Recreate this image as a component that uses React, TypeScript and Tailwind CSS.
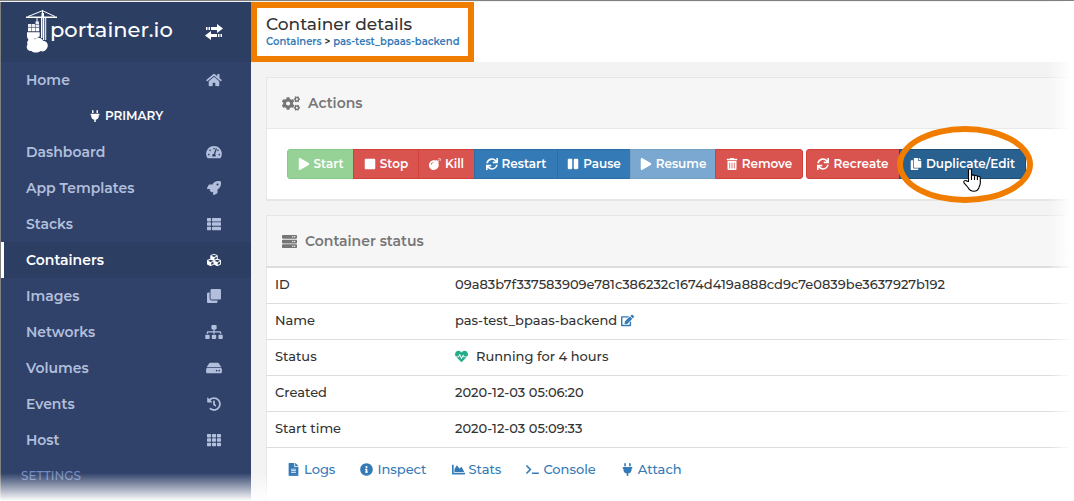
import type { ReactNode } from "react";
import {
  FaBomb,
  FaChartArea,
  FaClone,
  FaCogs,
  FaCopy,
  FaCubes,
  FaEdit,
  FaFileAlt,
  FaHdd,
  FaHeartbeat,
  FaHistory,
  FaHome,
  FaInfoCircle,
  FaPause,
  FaPlay,
  FaPlug,
  FaRocket,
  FaServer,
  FaSitemap,
  FaStop,
  FaSync,
  FaTachometerAlt,
  FaTerminal,
  FaTh,
  FaThList,
  FaTrashAlt,
} from "react-icons/fa";

const NAV_ITEMS = [
  { label: "Dashboard", icon: FaTachometerAlt },
  { label: "App Templates", icon: FaRocket },
  { label: "Stacks", icon: FaThList },
  { label: "Containers", icon: FaCubes, active: true },
  { label: "Images", icon: FaClone },
  { label: "Networks", icon: FaSitemap },
  { label: "Volumes", icon: FaHdd },
  { label: "Events", icon: FaHistory },
  { label: "Host", icon: FaTh },
];

const ACTIONS = [
  { label: "Start", icon: FaPlay, width: "w-[67px]", color: "bg-[#96d196] border-[#88c888] rounded-l-[3px]", disabled: true },
  { label: "Stop", icon: FaStop, width: "w-[66px]", color: "bg-[#d9534f] border-[#d43f3a]" },
  { label: "Kill", icon: FaBomb, width: "w-[57px]", color: "bg-[#d9534f] border-[#d43f3a]" },
  { label: "Restart", icon: FaSync, width: "w-[84px]", color: "bg-[#337ab7] border-[#2e6da4]" },
  { label: "Pause", icon: FaPause, width: "w-[74px]", color: "bg-[#337ab7] border-[#2e6da4]" },
  { label: "Resume", icon: FaPlay, width: "w-[86px]", color: "bg-[#7aa8d0] border-[#769fc4]", disabled: true },
  { label: "Remove", icon: FaTrashAlt, width: "w-[88px]", color: "bg-[#d9534f] border-[#d43f3a] rounded-r-[3px]" },
];

const LINKS = [
  { label: "Logs", icon: FaFileAlt },
  { label: "Inspect", icon: FaInfoCircle },
  { label: "Stats", icon: FaChartArea },
  { label: "Console", icon: FaTerminal },
  { label: "Attach", icon: FaPlug },
];

const BUTTON =
  "flex h-[30px] shrink-0 items-center justify-center gap-1 border text-[12px] font-semibold whitespace-nowrap text-white";

const CraneLogo = () => (
  <svg width="32" height="44" viewBox="0 0 32 44" fill="#fff" aria-hidden="true">
    <path d="M0 6.500h31V8H0z" />
    <path d="M2 6.500 16.500 0.700 29 6.500M16.500 0v6.500" fill="none" stroke="#fff" />
    <path d="M15.500 3h2.500v5h-2.500z" />
    <path d="M15 8h1v20h-1zM17 8h1.300v22H17zM19.200 8h1v22h-1z" />
    <path d="M16 8h1v20h-1z" opacity=".45" />
    <path d="M10.500 8h1v4h-1z" />
    <path d="M9.500 11.500H13V14H9.500zM2 14h3.500v3.300H2zM6 14h3v3.300H6zM9.500 14.500h3.700v2.800H9.500z" opacity=".9" />
    <path d="M2 17.800h3.500v3.500H2zM6 17.800h3v3.500H6zM9.500 17.800h3.700v3.500H9.500z" />
    <path d="M1 22.200h12.700v4L11 28 4 30H2.500L1 27z" />
    <path d="M5.500 41C1.500 41.500-.5 37.500 1.500 34.500 0 30.500 4.500 27.500 8.500 29.300c2.500-2.800 7.500-1.800 8.500 1.400 4.500.3 6 4.800 3.800 7.800-1.300 2.600-4.300 3.500-6.300 2.500-2.500 2-7 2-9 0z" />
  </svg>
);

const ToggleIcon = () => (
  <svg width="18" height="16" viewBox="0 0 18 16" fill="#fff" aria-hidden="true">
    <path d="M1 3h1.500v3H1zM3.500 3H5v3H3.500zM6 3h6V0l6 4.500L12 9V6H6z" />
    <path d="M17 10h-1.500v3H17zM14.500 10H13v3h1.500zM12 10H6V7l-6 4.500L6 16v-3h6z" />
  </svg>
);

const HandCursor = () => (
  <svg width="19" height="24" viewBox="0 0 19 24" aria-hidden="true">
    <path
      d="M5.500 13.500V2.500c0-2.300 3-2.300 3 0v5.300c.6-1.300 2.700-1.200 3 .4.700-1.200 2.700-.9 2.900.6.900-1 2.900-.6 2.900 1.200V15c0 2-1 3-1.500 5-1 2.500-2.600 3.200-5 3.200-3 0-4.600-1.200-5.800-3.700L1 14.800c-.8-1.600.9-3 2.300-1.900z"
      fill="#fff"
      stroke="#000"
      strokeWidth="1.100"
      strokeLinejoin="round"
    />
    <path d="M8.500 7.500V12M11.500 8.500V12M14.400 9V12" stroke="#000" strokeWidth="1.100" fill="none" />
  </svg>
);

const Sidebar = () => (
  <aside className="w-[251px] shrink-0 border-l border-[#808080] bg-[#30426a]">
    <div className="flex h-[60px] items-center justify-between bg-[#2d3e63] pr-7 pl-[25px]">
      <a href="#home" className="flex items-center text-[21px] leading-6 font-medium text-white">
        <CraneLogo />
        <span className="-ml-2 pb-1">portainer.io</span>
      </a>
      <button type="button" aria-label="Toggle sidebar">
        <ToggleIcon />
      </button>
    </div>
    <nav className="text-[14px] font-semibold text-[#b2bfdc]">
      <a href="#home" className="flex h-9 items-center justify-between pr-7 pl-[25px]">
        Home
        <FaHome className="h-[14px] w-[18px]" />
      </a>
      <div className="flex h-9 items-center justify-center gap-1 text-[12px] text-white">
        <FaPlug className="h-3 w-auto" />
        PRIMARY
      </div>
      {NAV_ITEMS.map(({ label, icon: Icon, active }) => (
        <a
          key={label}
          href={`#${label}`}
          className={`flex h-9 items-center justify-between border-l-3 pr-7 pl-[22px] ${
            active ? "border-white bg-[#2d3e63] text-white" : "border-transparent"
          }`}
        >
          {label}
          <Icon className="h-[14px] w-[18px]" />
        </a>
      ))}
      <div className="flex h-9 items-center pl-5 text-[12px] font-medium text-[#738bc0]">SETTINGS</div>
    </nav>
  </aside>
);

const DetailRow = ({ label, children }: { label: string; children: ReactNode }) => (
  <tr className="h-9 border-b border-[#dddddd]">
    <th scope="row" className="w-[180px] pb-px pl-2 text-left font-medium">
      {label}
    </th>
    <td className="pb-px pl-2">{children}</td>
  </tr>
);

const App = () => {
  return (
    <div className="relative flex h-screen overflow-hidden border-t border-[#808080] bg-[#f3f3f3] pt-px font-['Montserrat','Inter',sans-serif] text-[#333]">
      <Sidebar />

      <main className="min-w-0 flex-1">
        <header className="flex h-[60px] bg-white">
          <div className="border-6 border-[#f07d00] pt-[6px] pr-2 pl-[9px]">
            <h1 className="text-[17px] leading-5 font-medium">Container details</h1>
            <div className="text-[10px] leading-4 font-semibold">
              <a href="#containers" className="text-[#337ab7]">Containers</a>
              {" > "}
              <a href="#container" className="text-[#337ab7]">pas-test_bpaas-backend</a>
            </div>
          </div>
        </header>

        <div className="flex flex-col gap-[14px] pt-[15px] pl-[15px]">
          {/* Actions */}
          <section className="border-t border-b-2 border-l border-[#e6e6e6] bg-white">
            <h2 className="flex h-[51px] items-center gap-2 border-b border-[#e9e9e9] bg-[#f6f6f6] pl-[15px] text-[14px] font-semibold text-[#767676]">
              <FaCogs className="h-[15px] w-[18px]" />
              Actions
            </h2>
            <div className="flex py-5 pl-5">
              {ACTIONS.map(({ label, icon: Icon, width, color, disabled }) => (
                <button key={label} type="button" disabled={disabled} className={`${BUTTON} ${width} ${color} -mr-px`}>
                  <Icon className="h-3 w-auto" />
                  {label}
                </button>
              ))}
              <button type="button" className={`${BUTTON} ml-1 w-[94px] rounded-l-[3px] border-[#d43f3a] bg-[#d9534f]`}>
                <FaSync className="h-3 w-auto" />
                Recreate
              </button>
              <div className="relative -ml-px">
                <button type="button" className={`${BUTTON} w-[127px] rounded-r-[3px] border-[#204d74] bg-[#286090]`}>
                  <FaCopy className="h-3 w-auto" />
                  Duplicate/Edit
                </button>
                <div className="pointer-events-none absolute -top-[23px] -right-[7px] -left-[2px] h-[77px] rounded-[50%] border-6 border-[#f07d00]" />
                <div className="pointer-events-none absolute top-[19px] left-16">
                  <HandCursor />
                </div>
              </div>
            </div>
          </section>

          {/* Container status */}
          <section className="border-t border-l border-[#e6e6e6] bg-white">
            <h2 className="flex h-[50px] items-center gap-2 bg-[#f6f6f6] pl-[15px] text-[14px] font-semibold text-[#767676]">
              <FaServer className="size-[15px]" />
              Container status
            </h2>
            <table className="w-full border-collapse border-t-2 border-[#dddddd] text-[13px] font-medium">
              <tbody>
                <DetailRow label="ID">09a83b7f337583909e781c386232c1674d419a888cd9c7e0839be3637927b192</DetailRow>
                <DetailRow label="Name">
                  <span className="flex items-center gap-1">
                    pas-test_bpaas-backend
                    <a href="#rename" aria-label="Rename container" className="text-[#337ab7]">
                      <FaEdit className="h-[13px] w-auto" />
                    </a>
                  </span>
                </DetailRow>
                <DetailRow label="Status">
                  <span className="flex items-center gap-2">
                    <FaHeartbeat className="size-[13px] text-[#23ae89]" />
                    Running for 4 hours
                  </span>
                </DetailRow>
                <DetailRow label="Created">2020-12-03 05:06:20</DetailRow>
                <DetailRow label="Start time">2020-12-03 05:09:33</DetailRow>
              </tbody>
            </table>
            <div className="flex h-24 gap-[25px] pt-3 pl-5 text-[13px] font-medium text-[#337ab7]">
              {LINKS.map(({ label, icon: Icon }) => (
                <a key={label} href={`#${label}`} className="flex h-5 items-center gap-1">
                  <Icon className="h-[13px] w-auto" />
                  {label}
                </a>
              ))}
            </div>
          </section>
        </div>
      </main>

      {/* Page edges fade out to white */}
      <div className="pointer-events-none absolute inset-y-0 right-0 w-[26px] bg-linear-to-r from-transparent to-white to-90%" />
      <div className="pointer-events-none absolute inset-x-0 bottom-0 h-7 bg-linear-to-b from-transparent to-white" />
    </div>
  );
};

export default App;
